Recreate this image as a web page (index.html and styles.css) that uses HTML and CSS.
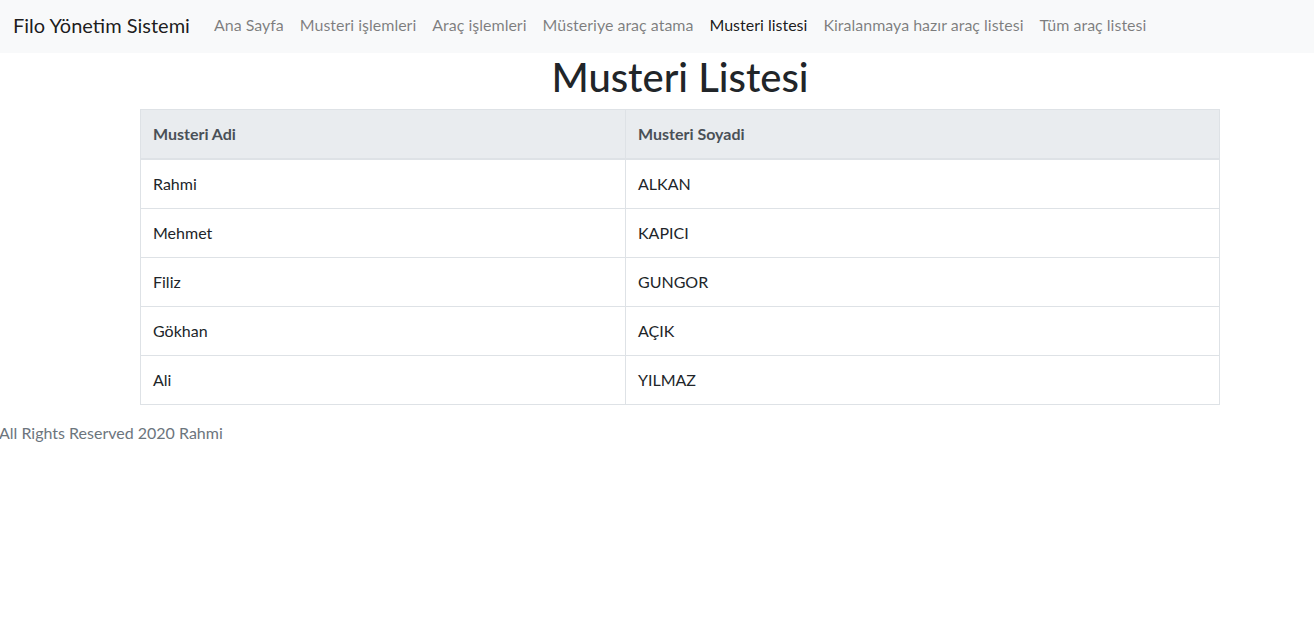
FILE: index.html
```html
<!DOCTYPE html>
<html lang="tr">
<head>
<meta charset="utf-8">
<title>Musteri Listesi</title>
<link rel="stylesheet" href="styles.css">
</head>
<body>
<nav class="navbar">
  <a class="brand" href="#">Filo Yönetim Sistemi</a>
  <ul class="nav">
    <li><a class="nav-link" href="#">Ana Sayfa</a></li>
    <li><a class="nav-link" href="#">Musteri işlemleri</a></li>
    <li><a class="nav-link" href="#">Araç işlemleri</a></li>
    <li><a class="nav-link" href="#">Müsteriye araç atama</a></li>
    <li><a class="nav-link active" href="#">Musteri listesi</a></li>
    <li><a class="nav-link" href="#">Kiralanmaya hazır araç listesi</a></li>
    <li><a class="nav-link" href="#">Tüm araç listesi</a></li>
  </ul>
</nav>
<main class="content">
  <h1 class="title">Musteri Listesi</h1>
  <table class="table">
    <thead>
      <tr><th class="col-first">Musteri Adi</th><th>Musteri Soyadi</th></tr>
    </thead>
    <tbody>
      <tr><td>Rahmi</td><td>ALKAN</td></tr>
      <tr><td>Mehmet</td><td>KAPICI</td></tr>
      <tr><td>Filiz</td><td>GUNGOR</td></tr>
      <tr><td>Gökhan</td><td>AÇIK</td></tr>
      <tr><td>Ali</td><td>YILMAZ</td></tr>
    </tbody>
  </table>
</main>
<footer class="footer">All Rights Reserved 2020 Rahmi</footer>
</body>
</html>
```
FILE: styles.css
```css
* { box-sizing: border-box; }
html, body { margin: 0; padding: 0; }
body {
  font-family: Lato, "Liberation Sans", sans-serif;
  font-size: 16px;
  line-height: 24px;
  color: #212529;
  background: #fff;
}
a { text-decoration: none; }
.navbar {
  display: flex;
  align-items: center;
  background: #f8f9fa;
  padding: 6px 16px 10px 13px;
  height: 53px;
}
.brand {
  font-size: 20px;
  line-height: 30px;
  color: rgba(0,0,0,.9);
  margin-right: 16px;
  padding: 5px 0;
}
.nav {
  display: flex;
  list-style: none;
  margin: 0;
  padding: 0;
}
.nav-link {
  display: block;
  padding: 8px 8px;
  color: rgba(0,0,0,.5);
}
.nav-link.active { color: rgba(0,0,0,.9); }
.content {
  width: 1080px;
  margin-left: 140px;
}
.title {
  margin: 0 0 8px 0;
  font-size: 40px;
  line-height: 48px;
  font-weight: 500;
  text-align: center;
}
.table {
  width: 100%;
  border-collapse: collapse;
  margin-bottom: 16px;
}
.table th, .table td {
  border: 1px solid #dee2e6;
  padding: 12px;
  text-align: left;
  vertical-align: top;
}
.table th {
  background: #e9ecef;
  color: #495057;
  font-weight: 700;
  border-bottom-width: 2px;
}
.col-first { width: 485px; }
.footer {
  color: #6c757d;
  margin-left: -1px;
}
```
